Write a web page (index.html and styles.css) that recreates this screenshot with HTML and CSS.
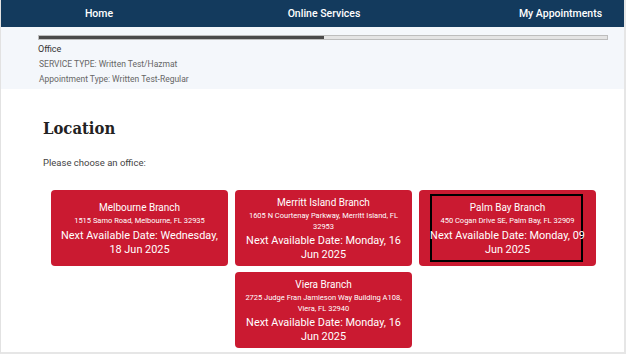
FILE: index.html
```html
<!DOCTYPE html>
<html lang="en">
<head>
    <meta charset="UTF-8">
    <meta name="viewport" content="width=device-width, initial-scale=1.0">
    <title>Location - Appointment Scheduler</title>
    <link rel="stylesheet" href="styles.css">
</head>
<body>

<div class="page">
    <nav class="topnav">
        <a class="nav-home" href="#">Home</a>
        <a class="nav-services" href="#">Online Services</a>
        <a class="nav-appts" href="#">My Appointments</a>
    </nav>

    <div class="summary">
        <div class="progress"><div class="progress-fill"></div></div>
        <div class="step">Office</div>
        <div class="meta">SERVICE TYPE: Written Test/Hazmat</div>
        <div class="meta">Appointment Type: Written Test-Regular</div>
    </div>

    <div class="content">
        <h1>Location</h1>
        <p class="prompt">Please choose an office:</p>

        <div class="offices">
            <div class="office">
                <a class="office-link" href="#">
                    <span class="office-name">Melbourne Branch</span>
                    <span class="office-addr">1515 Samo Road, Melbourne, FL 32935</span>
                    <span class="office-date">Next Available Date: Wednesday, 18 Jun 2025</span>
                </a>
            </div>
            <div class="office">
                <a class="office-link" href="#">
                    <span class="office-name">Merritt Island Branch</span>
                    <span class="office-addr">1605 N Courtenay Parkway, Merritt Island, FL 32953</span>
                    <span class="office-date">Next Available Date: Monday, 16 Jun 2025</span>
                </a>
            </div>
            <div class="office">
                <a class="office-link focused" href="#">
                    <span class="office-name">Palm Bay Branch</span>
                    <span class="office-addr">450 Cogan Drive SE, Palm Bay, FL 32909</span>
                    <span class="office-date">Next Available Date: Monday, 09 Jun 2025</span>
                </a>
            </div>
            <div class="office">
                <a class="office-link" href="#">
                    <span class="office-name">Viera Branch</span>
                    <span class="office-addr">2725 Judge Fran Jamieson Way Building A108, Viera, FL 32940</span>
                    <span class="office-date">Next Available Date: Monday, 16 Jun 2025</span>
                </a>
            </div>
        </div>
    </div>
</div>

</body>
</html>
```

FILE: styles.css
```css
html, body {
    margin: 0;
    padding: 0;
}
body {
    font-family: Roboto, "Liberation Sans", Arial, sans-serif;
    background-color: #fff;
}
.page {
    height: 354px;
    border-left: 1px solid #e2e2e2;
    border-right: 2px solid #e6e6e6;
    border-bottom: 2px solid #e6e6e6;
    box-sizing: border-box;
    overflow: hidden;
}
.topnav {
    display: flex;
    height: 27px;
    align-items: center;
    background-color: #133a5d;
}
.topnav a {
    color: #fff;
    text-decoration: none;
    font-size: 10.5px;
    font-weight: 500;
    text-align: center;
}
.nav-home {
    width: 196px;
}
.nav-services {
    width: 254px;
}
.nav-appts {
    flex: 1;
    padding-left: 46px;
}
.summary {
    background-color: #f4f7fb;
    padding: 8px 0 5px 37px;
    height: 49px;
}
.progress {
    width: 568px;
    height: 3px;
    background-color: #e4e4e4;
    border: 1px solid #bdbdbd;
}
.progress-fill {
    width: 285px;
    height: 100%;
    background-color: #4a4a4a;
}
.step {
    font-size: 9px;
    color: #333;
    margin-top: 3px;
    line-height: 12px;
}
.meta {
    font-size: 8.5px;
    color: #666;
    line-height: 15px;
    padding-left: 1px;
}
.step + .meta {
    margin-top: 2px;
}
.content {
    padding: 0 20px 0 42px;
}
h1 {
    font-family: "DejaVu Serif Condensed", "DejaVu Serif", "Liberation Serif", serif;
    font-weight: bold;
    font-size: 16.5px;
    color: #222;
    margin: 29px 0 0;
    line-height: 22px;
}
.prompt {
    font-size: 9.5px;
    color: #444;
    margin: 17px 0 0;
    line-height: 12px;
}
.offices {
    display: flex;
    flex-wrap: wrap;
    justify-content: center;
    gap: 6px 7px;
    margin-top: 21px;
}
.office {
    width: 177px;
    height: 76px;
    box-sizing: border-box;
    padding: 4px 9px 3px;
    background-color: #ca1a31;
    border-radius: 4px;
}
.office-link {
    position: relative;
    z-index: 0;
    display: flex;
    flex-direction: column;
    justify-content: center;
    height: 100%;
    color: #fff;
    text-decoration: none;
    text-align: center;
    box-sizing: border-box;
}
.office-link.focused::after {
    content: "";
    position: absolute;
    z-index: -1;
    top: 0;
    bottom: 1px;
    left: 2px;
    right: 4px;
    border: 2px solid #000;
}
.office-name {
    font-size: 10px;
    line-height: 16px;
}
.office-addr {
    font-size: 7.5px;
    line-height: 10.5px;
    margin-bottom: 2px;
}
.office-date {
    font-size: 10.9px;
    line-height: 14px;
}
```
